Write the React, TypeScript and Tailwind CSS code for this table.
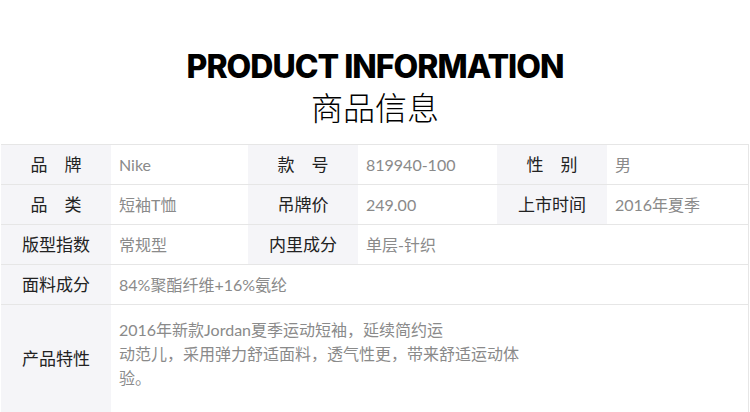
const cjk = "font-['Lato','Noto_Sans_CJK_SC',sans-serif]";

const Label = ({ text, tall }: { text: string; tall?: boolean }) => (
  <div
    className={`flex items-center justify-center bg-[#f5f5f8] text-[17px] text-[#222] ${
      tall ? "" : "h-[39px]"
    }`}
  >
    {text}
  </div>
);

const Value = ({ text, span }: { text: string; span?: boolean }) => (
  <div
    className={`flex h-[39px] items-center pl-[8px] text-[16px] text-[#8a8a8a] ${
      span ? "col-span-5" : ""
    }`}
  >
    {text}
  </div>
);

const App = () => {
  return (
    <div className={`w-[750px] h-[412px] overflow-hidden bg-white ${cjk}`}>
      {/* Heading */}
      <div className="flex flex-col items-center pt-[47px] pb-[19px]">
        <h1 className="font-['Inter',sans-serif] text-[32px] font-extrabold leading-[40px] tracking-[-1px] text-black">
          PRODUCT INFORMATION
        </h1>
        <p className="font-['Noto_Sans_CJK_SC',sans-serif] text-[32px] font-light leading-[38px] text-black">
          商品信息
        </p>
      </div>

      {/* Spec table */}
      <div className="mx-px border-y border-r border-[#e6e6e6]">
        <div className="grid grid-cols-[110px_137px_110px_139px_110px_1fr] border-b border-[#e6e6e6]">
          <Label text="品　牌" />
          <Value text="Nike" />
          <Label text="款　号" />
          <Value text="819940-100" />
          <Label text="性　别" />
          <Value text="男" />
        </div>
        <div className="grid grid-cols-[110px_137px_110px_139px_110px_1fr] border-b border-[#e6e6e6]">
          <Label text="品　类" />
          <Value text="短袖T恤" />
          <Label text="吊牌价" />
          <Value text="249.00" />
          <Label text="上市时间" />
          <Value text="2016年夏季" />
        </div>
        <div className="grid grid-cols-[110px_137px_110px_139px_110px_1fr] border-b border-[#e6e6e6]">
          <Label text="版型指数" />
          <Value text="常规型" />
          <Label text="内里成分" />
          <Value text="单层-针织" />
          <div className="bg-white" />
          <div />
        </div>
        <div className="grid grid-cols-[110px_1fr] border-b border-[#e6e6e6]">
          <Label text="面料成分" />
          <div className="flex h-[39px] items-center pl-[8px] text-[16px] text-[#8a8a8a]">
            84%聚酯纤维+16%氨纶
          </div>
        </div>
        <div className="grid h-[108px] grid-cols-[110px_1fr]">
          <Label text="产品特性" tall />
          <div className="pl-[8px] pt-[13px] text-[16px] leading-[24px] text-[#8a8a8a]">
            2016年新款Jordan夏季运动短袖，延续简约运
            <br />
            动范儿，采用弹力舒适面料，透气性更，带来舒适运动体
            <br />
            验。
          </div>
        </div>
      </div>
    </div>
  );
};

export default App;
